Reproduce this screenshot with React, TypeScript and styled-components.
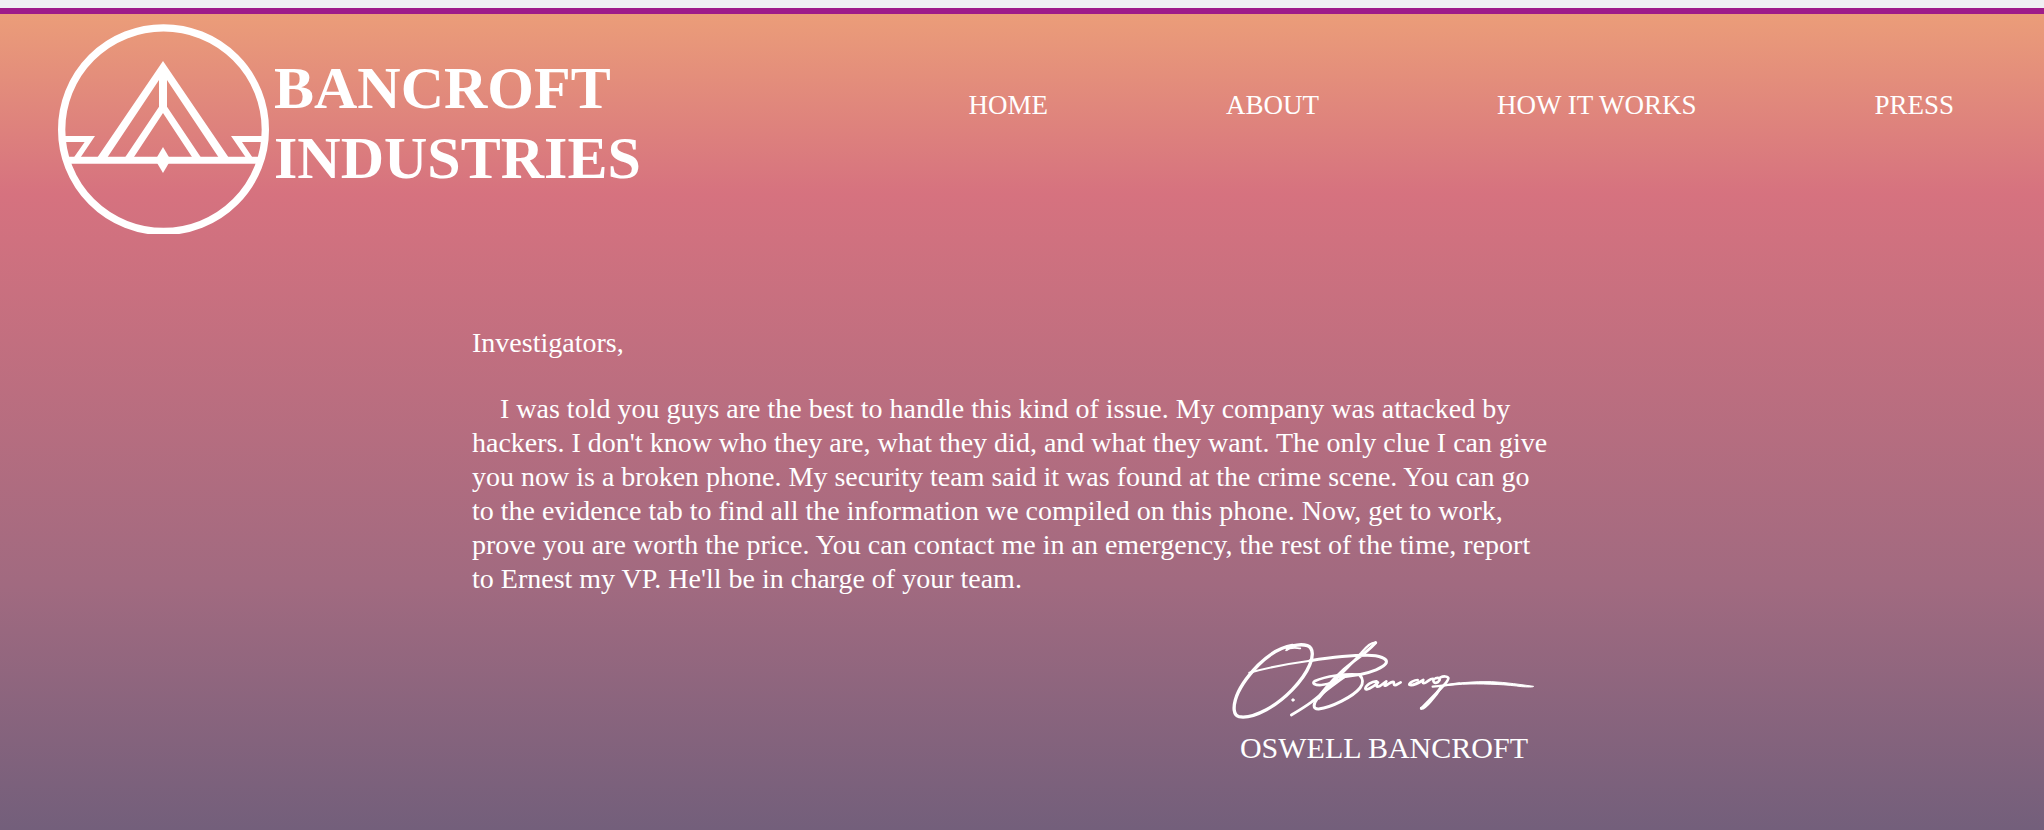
import React from "react";
import styled, { createGlobalStyle } from "styled-components";

const GlobalStyle = createGlobalStyle`
  * { box-sizing: border-box; }
  body {
    margin: 0;
    background: #eff0f3;
    color: #fff;
    font-family: "Liberation Serif", "Times New Roman", serif;
  }
  h1, p { margin: 0; }
`;

const Shell = styled.div`
  display: flex;
  flex-direction: column;
  min-height: 100vh;
  padding-top: 8px;
`;

const Page = styled.div`
  flex: 1;
  border-top: 6px solid #9e1b8a;
  background: linear-gradient(180deg, #eb9d79 0%, #d6727f 22%, #a16a80 70%, #735f7b 100%) padding-box;
`;

const Header = styled.header`
  display: flex;
  align-items: flex-start;
  justify-content: space-between;
  padding: 10px 90px 0 58px;
`;

const Brand = styled.a`
  display: flex;
  align-items: flex-start;
  gap: 5px;
  color: inherit;
  text-decoration: none;
`;

const Emblem = styled.svg`
  display: block;
  width: 211px;
  height: 210px;
`;

const Title = styled.h1`
  padding-top: 29px;
  font-size: 60px;
  line-height: 70px;
  font-weight: 700;
`;

const Line = styled.span`
  display: block;
`;

const Nav = styled.nav`
  display: flex;
  gap: 178px;
  padding-top: 64px;
`;

const NavLink = styled.a`
  color: inherit;
  font-size: 27px;
  line-height: 34px;
  text-decoration: none;
  white-space: nowrap;
`;

const Letter = styled.main`
  display: flex;
  flex-direction: column;
  gap: 32px;
  padding: 92px 24% 32px 472px;
  font-size: 28px;
  line-height: 34px;
`;

const Body = styled.p`
  text-indent: 28px;
`;

const Signature = styled.div`
  display: flex;
  flex-direction: column;
  align-items: center;
  align-self: flex-end;
  gap: 12px;
  padding: 12px 18px 0 0;
`;

const Autograph = styled.svg`
  display: block;
  width: 303px;
  height: 79px;
  fill: none;
  stroke: #fff;
  stroke-linecap: round;
  stroke-linejoin: round;
`;

const Signer = styled.p`
  font-size: 30px;
  line-height: 34px;
`;

const links = ["HOME", "ABOUT", "HOW IT WORKS", "PRESS"];

function Logo() {
  return (
    <Emblem viewBox="174 72 633 630" fill="#fff" aria-hidden="true">
      <circle cx="490.5" cy="389" r="305.5" fill="none" stroke="#fff" strokeWidth="22" />
      <path d="M204 470H776V491H204Z" />
      <path d="M489 183L687 474H657L501 240V320L604 474H578L489 339L400 474H374L477 320V240L321 474H291Z" />
      <path d="M489 441L512 480L489 519L466 480Z" />
      <path d="M188 408H285L240 475H220L254 426H188Z" />
      <path d="M793 408H693L739 475H759L726 426H793Z" />
    </Emblem>
  );
}

function BancroftAutograph() {
  return (
    <Autograph viewBox="66 60 909 237" role="img" aria-label="Signature of O. Bancroft">
      <path
        strokeWidth="10"
        d="M232 86C246 74 276 72 292 77C312 84 309 112 299 135C279 183 222 241 169 269C137 286 106 294 87 290C70 286 70 262 76 240C86 204 113 168 145 135C177 103 213 81 247 76"
      />
      <path strokeWidth="5" d="M228 91C242 80 256 84 271 85" />
      <path strokeWidth="6" d="M118 158C166 145 225 132 300 122" />
      <path
        strokeWidth="9"
        d="M300 122C360 113 430 106 472 106C509 106 533 116 529 128C523 143 480 158 448 164C459 175 461 191 450 204C429 230 365 262 326 267C306 268 311 250 322 235C356 191 395 151 431 124C458 104 487 79 497 68"
      />
      <path strokeWidth="7" d="M497 68C486 66 469 80 454 98C426 130 397 160 372 184" />
      <path
        strokeWidth="8"
        d="M448 164C410 160 345 168 315 183C303 190 315 196 334 195C360 194 392 178 413 164C375 190 337 220 303 247C287 259 264 273 244 285"
      />
      <path strokeWidth="8" d="M367 190C355 202 340 218 326 235M391 172L448 164" />
      <path
        strokeWidth="8"
        d="M500 184C486 183 467 196 466 206C467 213 489 202 504 187C496 199 499 203 510 198L529 184C523 194 521 200 529 196C539 190 545 183 551 186C553 190 549 197 558 195L572 187"
      />
      <path
        strokeWidth="8"
        d="M623 180C613 180 597 188 598 194C604 198 624 190 640 180C636 188 638 192 648 187C657 182 663 173 671 177C668 187 674 192 684 186C694 178 687 171 677 175M690 173C700 168 713 168 715 174C717 182 698 200 681 217L634 265"
      />
      <path strokeWidth="9" d="M634 265C638 266 650 257 662 243C677 227 687 212 693 202" />
      <path strokeWidth="7" d="M668 200C689 198 720 194 748 190" />
      <path
        fill="#fff"
        strokeWidth="3"
        d="M690 198C735 188 795 184 845 185C890 187 934 194 971 199C970 202 952 201 935 200C894 194 831 191 780 192C750 192 717 197 690 198Z"
      />
      <circle cx="249" cy="240" r="4" fill="#fff" strokeWidth="2" />
    </Autograph>
  );
}

export default function App() {
  return (
    <Shell>
      <GlobalStyle />
      <Page>
        <Header>
          <Brand href="#home">
            <Logo />
            <Title>
              <Line>BANCROFT</Line>
              <Line>INDUSTRIES</Line>
            </Title>
          </Brand>
          <Nav aria-label="Main">
            {links.map((label) => (
              <NavLink key={label} href={`#${label.toLowerCase().replace(/ /g, "-")}`}>
                {label}
              </NavLink>
            ))}
          </Nav>
        </Header>
        <Letter>
          <p>Investigators,</p>
          <Body>
            I was told you guys are the best to handle this kind of issue. My company was attacked by
            hackers. I don't know who they are, what they did, and what they want. The only clue I can
            give you now is a broken phone. My security team said it was found at the crime scene. You
            can go to the evidence tab to find all the information we compiled on this phone. Now, get
            to work, prove you are worth the price. You can contact me in an emergency, the rest of the
            time, report to Ernest my VP. He'll be in charge of your team.
          </Body>
          <Signature>
            <BancroftAutograph />
            <Signer>OSWELL BANCROFT</Signer>
          </Signature>
        </Letter>
      </Page>
    </Shell>
  );
}
